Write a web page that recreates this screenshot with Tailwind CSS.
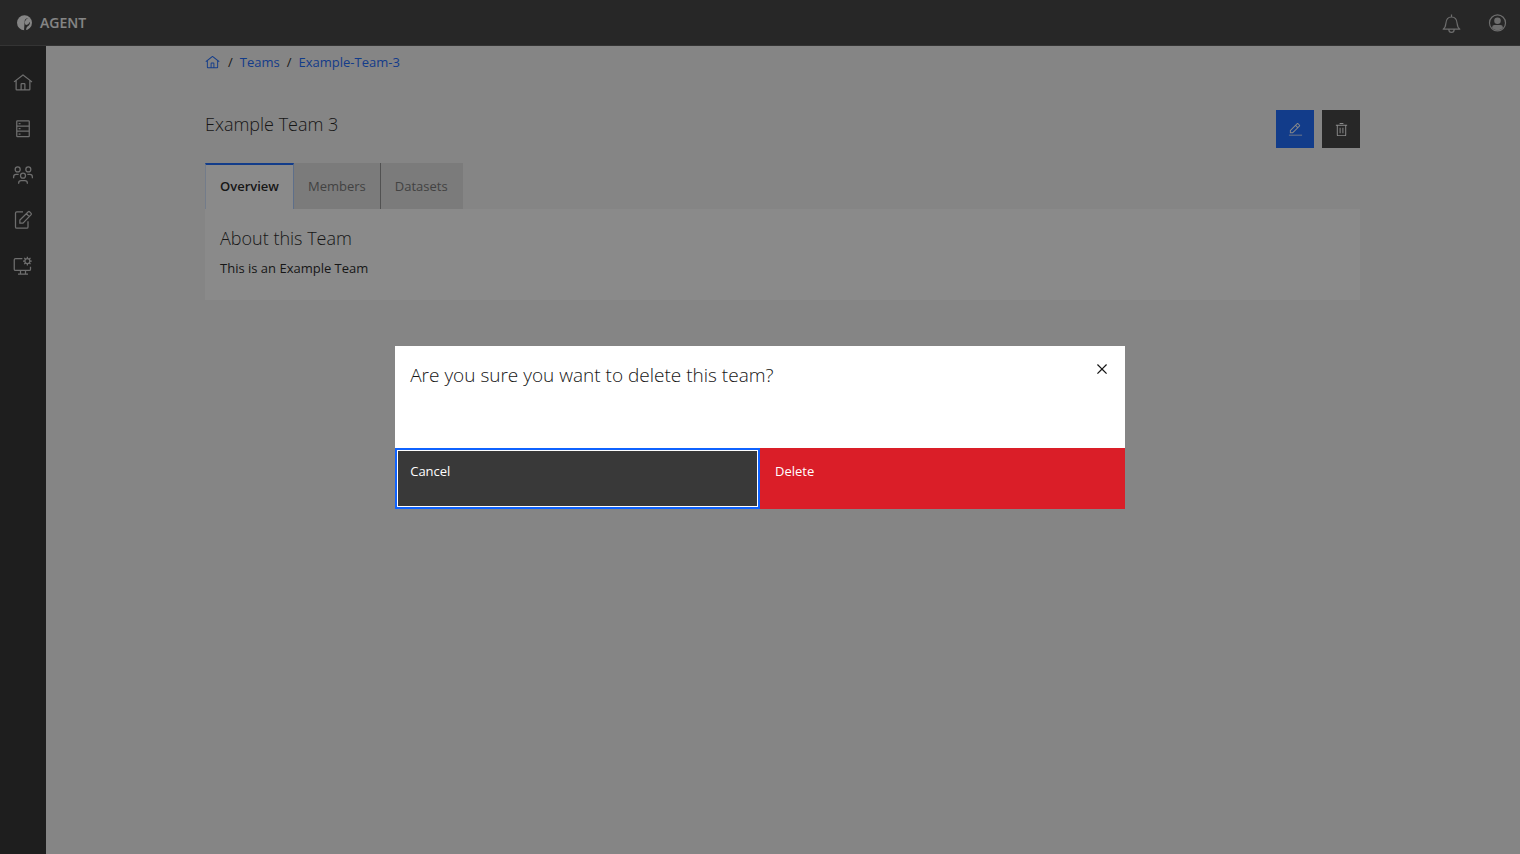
<!DOCTYPE html>
<html lang="en">
  <head>
    <meta charset="UTF-8" />
    <meta name="viewport" content="width=device-width, initial-scale=1.0" />
    <title>Example Team 3</title>
    <script src="https://cdn.jsdelivr.net/npm/@tailwindcss/browser@4"></script>
  </head>
  <body class="min-h-screen bg-[#f4f4f4] text-[#161616] text-[13px] font-['Open_Sans',sans-serif]">
    <div class="min-h-screen flex flex-col">
      <!-- Top bar -->
      <header class="h-[46px] shrink-0 flex items-center justify-between bg-[#393939] border-b border-[#525252] text-[#f4f4f4]">
        <a href="#" class="flex items-center gap-[7px] pl-4 pt-px text-sm font-semibold">
          <svg class="size-[17px]" viewBox="0 0 17 17" aria-hidden="true">
            <circle cx="8.500" cy="7.800" r="7.500" fill="currentColor" />
            <path fill="#393939" d="M12.400 3.200C10 3 8.600 4.400 8.600 6.500L8 15.800h2.200c-.2-2.300.3-3.500 1.600-4.500 1.500-1.100 2.200-2.300 2.200-4h-.6c-.3 1.500-1.500 2.500-3.600 2.700-.7-.8-1-1.800-1-3C9.400 5 10.500 3.800 12.400 3.200z" />
          </svg>
          AGENT
        </a>
        <div class="flex pt-px text-[#c6c6c6]">
          <button type="button" aria-label="Notifications" class="size-[46px] grid place-items-center">
            <svg class="size-[19px]" viewBox="0 0 32 32" fill="none" stroke="currentColor" stroke-width="2" stroke-linejoin="round" aria-hidden="true">
              <path d="M16 1v4M2 25.500c3-2 4-4.500 4.500-9.500C7 9 10.500 5 16 5s9 4 9.500 11c.5 5 1.500 7.500 4.500 9.500zM11.500 26c0 3 1.500 5 4.500 5s4.500-2 4.500-5" />
            </svg>
          </button>
          <button type="button" aria-label="Profile" class="size-[46px] grid place-items-center">
            <svg class="size-[19px]" viewBox="0 0 32 32" aria-hidden="true">
              <circle cx="16" cy="15" r="13.500" fill="none" stroke="currentColor" stroke-width="2" />
              <circle cx="16" cy="11.500" r="5.500" fill="currentColor" />
              <path fill="currentColor" d="M7 24v-1.500a4 4 0 0 1 4-4h10a4 4 0 0 1 4 4V24a13.500 13.500 0 0 1-18 0z" />
            </svg>
          </button>
        </div>
      </header>

      <div class="flex flex-1">
        <!-- Side rail -->
        <nav aria-label="Main" class="w-[46px] shrink-0 flex flex-col pt-[14px] bg-[#262626] text-[#c6c6c6]">
          <a href="#" aria-label="Home" class="h-[46px] grid place-items-center">
            <svg class="size-5" viewBox="0 0 32 32" fill="currentColor" aria-hidden="true">
              <path d="M16.612 2.214a1.010 1.010 0 0 0-1.243 0L1 13.419l1.243 1.572L4 13.621V26a2 2 0 0 0 2 2h20a2 2 0 0 0 2-2V13.630L29.757 15 31 13.428zM18 26h-4v-8h4zm2 0v-8a2 2 0 0 0-2-2h-4a2 2 0 0 0-2 2v8H6V12.062l10-7.790 10 7.800V26z" />
            </svg>
          </a>
          <a href="#" aria-label="Datasets" class="h-[46px] grid place-items-center">
            <svg class="size-5" viewBox="0 0 32 32" fill="none" stroke="currentColor" stroke-width="2" aria-hidden="true">
              <rect x="6" y="3" width="20" height="25" rx="1" />
              <path d="M6 11.500h20M6 19.500h20M9 7.500h3M9 15.500h3M9 24h3" />
            </svg>
          </a>
          <a href="#" aria-label="Teams" class="h-[45px] grid place-items-center">
            <svg class="size-5" viewBox="0 0 32 32" fill="none" stroke="currentColor" stroke-width="2" aria-hidden="true">
              <circle cx="16" cy="17" r="4" />
              <circle cx="7.500" cy="7" r="4" />
              <circle cx="24.500" cy="7" r="4" />
              <path d="M9 30v-1a4 4 0 0 1 4-4h6a4 4 0 0 1 4 4v1M1 21v-2a4 4 0 0 1 4-4h4M31 21v-2a4 4 0 0 0-4-4h-4" />
            </svg>
          </a>
          <a href="#" aria-label="Requests" class="h-[46px] grid place-items-center">
            <svg class="size-5" viewBox="0 0 32 32" fill="none" stroke="currentColor" stroke-width="2" aria-hidden="true">
              <path d="M16 3H6a2 2 0 0 0-2 2v22a2 2 0 0 0 2 2h16a2 2 0 0 0 2-2V18" />
              <path d="M11 21v-5L24.500 2.800a1.500 1.500 0 0 1 2 0l2.500 2.500a1.500 1.500 0 0 1 0 2L16 21zM21.500 6l5 5" />
            </svg>
          </a>
          <a href="#" aria-label="Administration" class="h-[46px] grid place-items-center">
            <svg class="size-5" viewBox="0 0 32 32" fill="none" stroke="currentColor" stroke-width="2" aria-hidden="true">
              <path d="M15 4H4a2 2 0 0 0-2 2v15a2 2 0 0 0 2 2h22a2 2 0 0 0 2-2v-4M12 23v6M20 23v6M8 29h16" />
              <circle cx="23" cy="8" r="4" />
              <path d="M23 1v3M23 12v3M16 8h3M27 8h3M18 3l2.200 2.200M25.800 10.800L28 13M28 3l-2.200 2.200M20.200 10.800L18 13" />
            </svg>
          </a>
        </nav>

        <main class="flex-1 min-w-0 pl-4 pr-[17px]">
          <div class="mx-auto w-full max-w-[1155px]">
            <nav aria-label="Breadcrumb" class="pt-[6px]">
              <ol class="flex items-center leading-5 text-[#0f62fe]">
                <li>
                  <a href="#" aria-label="Home">
                    <svg class="size-[15px]" viewBox="0 0 32 32" fill="currentColor" aria-hidden="true">
                      <path d="M16.612 2.214a1.010 1.010 0 0 0-1.243 0L1 13.419l1.243 1.572L4 13.621V26a2 2 0 0 0 2 2h20a2 2 0 0 0 2-2V13.630L29.757 15 31 13.428zM18 26h-4v-8h4zm2 0v-8a2 2 0 0 0-2-2h-4a2 2 0 0 0-2 2v8H6V12.062l10-7.790 10 7.800V26z" />
                    </svg>
                  </a>
                </li>
                <li class="pl-2 pr-[7px] text-[#161616]" aria-hidden="true">/</li>
                <li><a href="#">Teams</a></li>
                <li class="px-[7px] text-[#161616]" aria-hidden="true">/</li>
                <li><a href="#">Example-Team-3</a></li>
              </ol>
            </nav>

            <div class="flex items-start justify-between pt-[38px]">
              <h1 class="pt-[2px] text-lg leading-6 font-light">Example Team 3</h1>
              <div class="flex gap-2 text-white">
                <button type="button" aria-label="Edit team" class="size-[38px] grid place-items-center bg-[#0f62fe]">
                  <svg class="size-[15px]" viewBox="0 0 32 32" fill="currentColor" aria-hidden="true">
                    <path d="M2 27h28v2H2zM25.400 9c.8-.8.8-2 0-2.800l-3.600-3.600c-.8-.8-2-.8-2.800 0L4 17.600V24h6.400zM20.400 4L24 7.600l-3 3L17.400 7zM6 22v-3.600l10-10 3.600 3.600-10 10z" />
                  </svg>
                </button>
                <button type="button" aria-label="Delete team" class="size-[38px] grid place-items-center bg-[#393939]">
                  <svg class="size-[15px]" viewBox="0 0 32 32" fill="currentColor" aria-hidden="true">
                    <path d="M12 12h2v12h-2zM18 12h2v12h-2zM4 6v2h2v20a2 2 0 0 0 2 2h16a2 2 0 0 0 2-2V8h2V6zM8 28V8h16v20zM12 2h8v2h-8z" />
                  </svg>
                </button>
              </div>
            </div>

            <div role="tablist" class="flex h-[46px] mt-[15px]">
              <button type="button" role="tab" aria-selected="true" class="min-w-[89px] px-[14px] border-t-2 border-t-[#0f62fe] border-x border-l-[#d0e2ff] border-r-[#a6c8ff] bg-white text-left font-semibold">Overview</button>
              <button type="button" role="tab" aria-selected="false" class="min-w-[86px] px-[14px] pt-[2px] border-r border-[#8d8d8d] bg-[#e0e0e0] text-left text-[#6f6f6f]">Members</button>
              <button type="button" role="tab" aria-selected="false" class="min-w-[82px] px-[14px] pt-[2px] bg-[#e0e0e0] text-left text-[#6f6f6f]">Datasets</button>
            </div>
            <section role="tabpanel" class="px-[15px] pt-[17px] pb-[22px] bg-white">
              <h2 class="text-lg leading-6 font-light">About this Team</h2>
              <p class="mt-2 leading-5">This is an Example Team</p>
            </section>
          </div>
        </main>
      </div>
    </div>

    <!-- Delete confirmation -->
    <div class="fixed inset-0 flex items-center justify-center bg-[#161616]/50">
      <div role="dialog" aria-modal="true" aria-labelledby="modal-title" class="w-[48%] bg-white">
        <div class="flex items-start justify-between h-[102px] pl-[15px]">
          <h2 id="modal-title" class="pt-[17px] text-[19px] leading-6 font-light">Are you sure you want to delete this team?</h2>
          <button type="button" aria-label="Close" class="size-[46px] grid place-items-center">
            <svg class="size-5" viewBox="0 0 32 32" fill="currentColor" aria-hidden="true">
              <path d="M24 9.400L22.600 8 16 14.600 9.400 8 8 9.400l6.600 6.600L8 22.600 9.400 24l6.600-6.600 6.600 6.600 1.400-1.400-6.600-6.600z" />
            </svg>
          </button>
        </div>
        <div class="grid grid-cols-2 h-[61px] text-white">
          <button type="button" class="flex items-start px-[13px] pt-[11px] border-2 border-[#0f62fe] inset-ring inset-ring-white bg-[#393939] leading-5">Cancel</button>
          <button type="button" class="flex items-start px-[15px] pt-[13px] bg-[#da1e28] leading-5">Delete</button>
        </div>
      </div>
    </div>
  </body>
</html>
